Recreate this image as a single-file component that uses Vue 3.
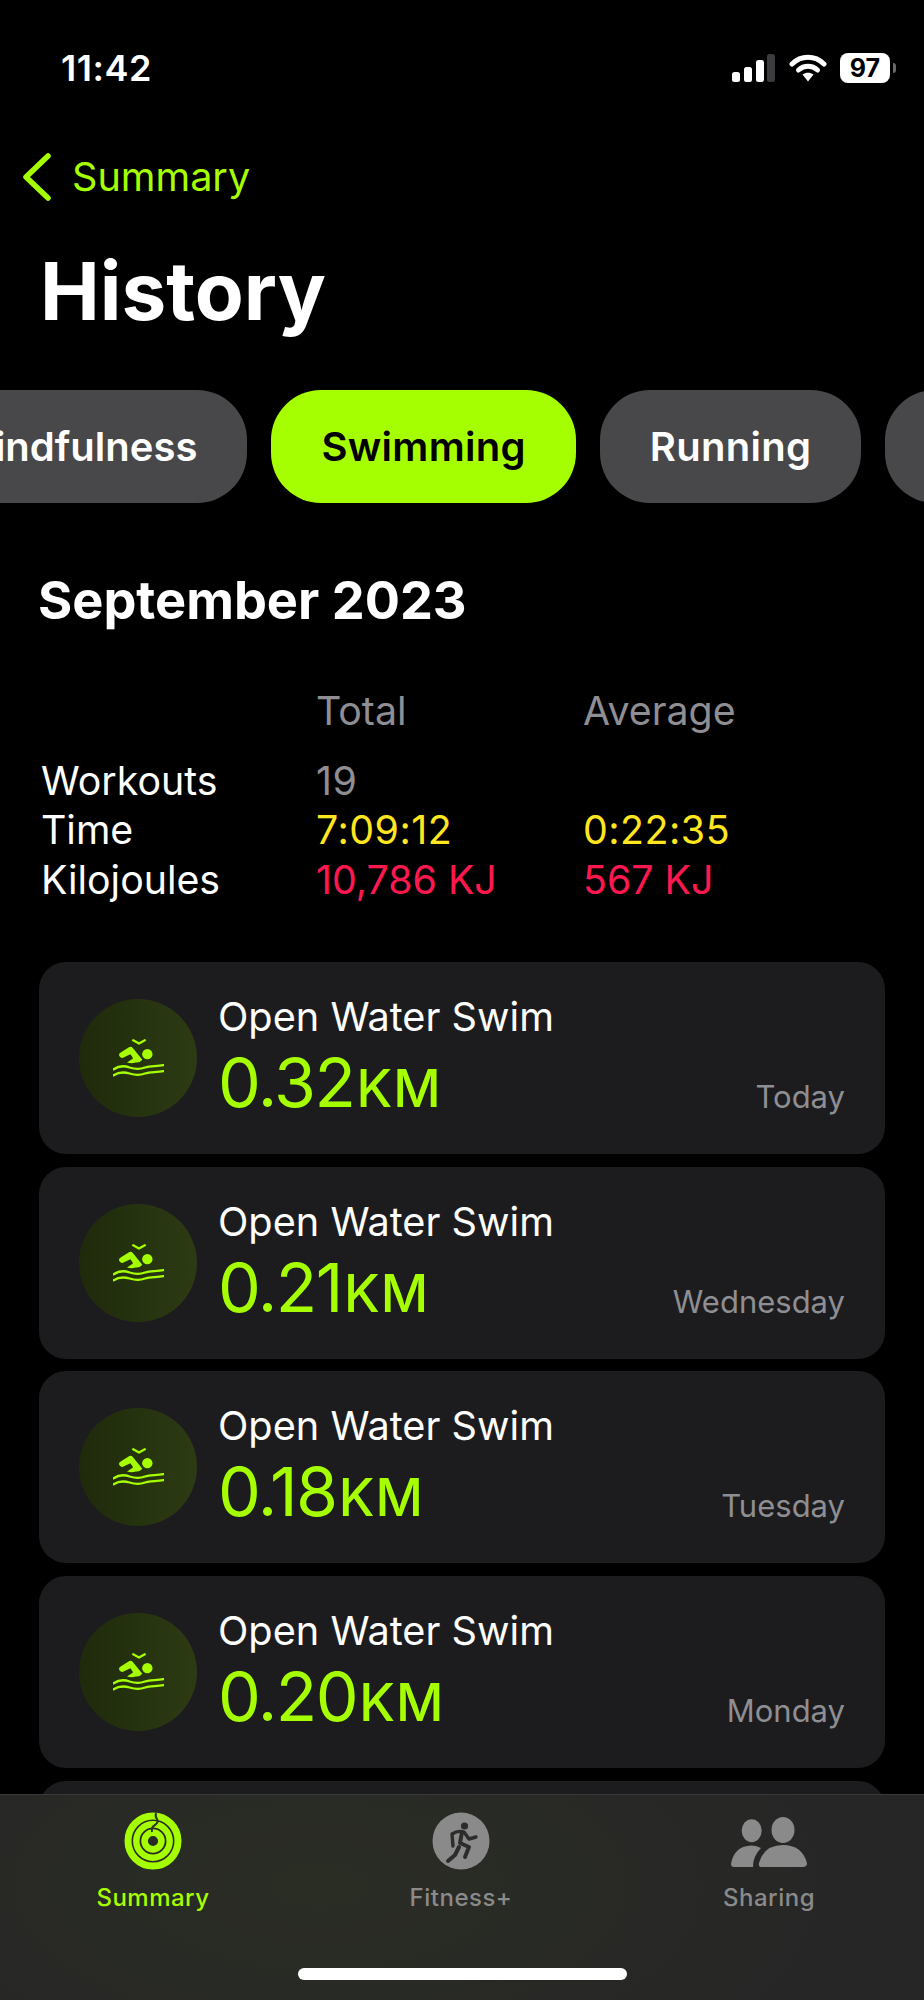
<template>
  <div class="screen">
    <div class="content">
      <div class="status-bar">
        <span class="time">11:42</span>
        <div class="status-icons">
          <svg class="signal" width="43" height="28" viewBox="0 0 43 28">
            <rect x="0" y="18" width="8" height="10" rx="2.5" fill="#fff" />
            <rect x="12" y="13" width="8" height="15" rx="2.5" fill="#fff" />
            <rect x="24" y="6" width="8" height="22" rx="2.5" fill="#fff" />
            <rect x="35" y="0" width="8" height="28" rx="2.5" fill="#3c3c3e" />
          </svg>
          <svg class="wifi" width="38" height="28" viewBox="0 0 38 28">
            <path d="M3 10 C12 1 26 1 35 10" fill="none" stroke="#fff" stroke-width="5" stroke-linecap="round" />
            <path d="M9.5 16 C15 11 23 11 28.5 16" fill="none" stroke="#fff" stroke-width="5" stroke-linecap="round" />
            <path d="M13.5 20.5 C17 18 21 18 24.5 20.5 L19 27.5 Z" fill="#fff" />
          </svg>
          <div class="battery"><span>97</span></div>
          <div class="battery-tip"></div>
        </div>
      </div>

      <div class="back">
        <svg width="30" height="48" viewBox="0 0 30 48">
          <path d="M26 3 L4 24 L26 45" fill="none" stroke="#a6ff00" stroke-width="5.5" stroke-linecap="round" stroke-linejoin="round" />
        </svg>
        <span>Summary</span>
      </div>

      <h1 class="title">History</h1>

      <div class="pills">
        <div v-for="pill in pills" :key="pill.name" class="pill" :class="{ active: pill.active }">{{ pill.name }}</div>
        <div class="pill pill-next"></div>
      </div>

      <h2 class="month">September 2023</h2>

      <div class="stats">
        <span></span>
        <span class="grey">Total</span>
        <span class="grey">Average</span>
        <span class="stat-gap"></span>
        <span class="stat-gap"></span>
        <span class="stat-gap"></span>
        <span>Workouts</span>
        <span class="grey num">19</span>
        <span></span>
        <span>Time</span>
        <span class="yellow num">7:09:12</span>
        <span class="yellow num">0:22:35</span>
        <span>Kilojoules</span>
        <span class="red">10,786 KJ</span>
        <span class="red">567 KJ</span>
      </div>

      <div class="cards">
        <div v-for="w in workouts" :key="w.day" class="card">
          <div class="circle">
            <svg width="51" height="38" viewBox="0 0 153 113">
              <circle cx="103" cy="45" r="15.5" fill="#a6ff00" />
              <path d="M58 2 L78 13 L98 2" fill="none" stroke="#a6ff00" stroke-width="7" stroke-linejoin="round" />
              <path d="M18 48 Q17 43 23 40 L48 24 Q55 21 60 27 L88 62 Q80 72 68 70 Q56 75 42 70 L60 58 Q58 52 52 45 L30 56 Q22 59 18 48 Z" fill="#a6ff00" />
              <path d="M2 90 C20 78 36 80 50 85 C66 90 80 91 96 85 C112 80 130 82 151 78" fill="none" stroke="#a6ff00" stroke-width="7" stroke-linecap="round" />
              <path d="M2 108 C20 97 36 99 50 103 C66 108 80 109 96 103 C112 98 130 100 151 96" fill="none" stroke="#a6ff00" stroke-width="7" stroke-linecap="round" />
            </svg>
          </div>
          <div class="info">
            <div class="name">Open Water Swim</div>
            <div class="dist">{{ w.dist }}<small>KM</small></div>
          </div>
          <div class="day">{{ w.day }}</div>
        </div>
        <div class="card"></div>
      </div>
    </div>

    <div class="tabbar">
      <div class="tab-items">
        <div class="tab active">
          <svg width="58" height="58" viewBox="0 0 58 58">
            <circle cx="29" cy="29" r="25" fill="none" stroke="#a6ff00" stroke-width="7" />
            <circle cx="29" cy="29" r="16.7" fill="none" stroke="#a6ff00" stroke-width="6.4" />
            <circle cx="29" cy="29" r="8.4" fill="none" stroke="#a6ff00" stroke-width="6.6" />
            <path d="M32 1 Q31 5 33 7 Q35 10 31 13 Q27 15 28 20" fill="none" stroke="#2d2f29" stroke-width="2" />
          </svg>
          <span>Summary</span>
        </div>
        <div class="tab">
          <svg width="58" height="58" viewBox="0 0 58 58">
            <circle cx="29" cy="29" r="28.5" fill="#8a8a8a" />
            <circle cx="32.5" cy="14" r="3.6" fill="#2c2c2b" />
            <path d="M21 34 L20 22 Q26 18 32 20 L37 27 L44 25" fill="none" stroke="#2c2c2b" stroke-width="3.4" stroke-linejoin="round" stroke-linecap="round" />
            <path d="M30 20 L28 31 L37 35 L33 45" fill="none" stroke="#2c2c2b" stroke-width="4" stroke-linejoin="round" stroke-linecap="round" />
            <path d="M27 35 L23 43 L16 49" fill="none" stroke="#2c2c2b" stroke-width="4" stroke-linejoin="round" stroke-linecap="round" />
          </svg>
          <span>Fitness+</span>
        </div>
        <div class="tab">
          <svg width="78" height="58" viewBox="0 0 78 58">
            <ellipse cx="21.7" cy="18.7" rx="10" ry="11.5" fill="#8a8a8a" />
            <ellipse cx="53" cy="18" rx="11.5" ry="13" fill="#8a8a8a" />
            <path d="M1 52 Q1 55 4 55 L23 55 Q23 44 31 36 Q27 33.5 21.7 33.5 Q4 34 1 52 Z" fill="#8a8a8a" />
            <path d="M29 51 Q28 55 32 55 L73 55 Q77 55 77 51 Q72 33 53 33 Q34 33 29 51 Z" fill="#8a8a8a" />
          </svg>
          <span>Sharing</span>
        </div>
      </div>
      <div class="home-indicator"></div>
    </div>
  </div>
</template>

<script setup>
const pills = [
  { name: 'Mindfulness' },
  { name: 'Swimming', active: true },
  { name: 'Running' }
]

const workouts = [
  { dist: '0.32', day: 'Today' },
  { dist: '0.21', day: 'Wednesday' },
  { dist: '0.18', day: 'Tuesday' },
  { dist: '0.20', day: 'Monday' }
]
</script>

<style>
html,
body {
  background: #000;
}
</style>

<style scoped>
.screen {
  width: 924px;
  height: 2000px;
  background: #000;
  color: #fff;
  font-family: Inter, "Liberation Sans", sans-serif;
  display: flex;
  flex-direction: column;
  overflow: hidden;
}

.content {
  flex: 1;
  min-height: 0;
  overflow: hidden;
}

.status-bar {
  height: 52px;
  margin-top: 42px;
  padding: 0 28px 0 61px;
  display: flex;
  align-items: center;
  justify-content: space-between;
}

.time {
  font-size: 36px;
  font-weight: 600;
  letter-spacing: 0.5px;
}

.status-icons {
  display: flex;
  align-items: center;
}

.signal {
  margin-right: 14px;
}

.wifi {
  margin-right: 13px;
}

.battery {
  width: 50px;
  height: 30px;
  background: #fff;
  border-radius: 8px;
  color: #000;
  font-size: 25px;
  font-weight: 700;
  line-height: 30px;
  text-align: center;
}

.battery-tip {
  width: 3px;
  height: 10px;
  margin-left: 3px;
  background: #6a6a6c;
  border-radius: 0 3px 3px 0;
}

.back {
  margin-top: 57px;
  padding-left: 22px;
  height: 52px;
  display: flex;
  align-items: center;
  gap: 20px;
  color: #a6ff00;
  font-size: 39.6px;
}

.title {
  margin: 38px 0 0 40px;
  font-size: 80px;
  font-weight: 700;
  line-height: 100px;
}

.pills {
  margin-top: 49px;
  margin-left: -92px;
  display: flex;
  gap: 24px;
}

.pill {
  flex-shrink: 0;
  height: 113px;
  padding: 0 50px;
  border-radius: 50px;
  background: #48484a;
  font-size: 40px;
  font-weight: 600;
  line-height: 113px;
  letter-spacing: 0.3px;
}

.pill:first-child {
  letter-spacing: 0;
}

.pill-next {
  width: 100px;
}

.pill.active {
  background: #a6ff00;
  color: #000;
}

.month {
  margin: 64px 0 0 38px;
  font-size: 52.3px;
  font-weight: 700;
  line-height: 66px;
}

.stats {
  margin: 53px 0 0 41px;
  display: grid;
  grid-template-columns: 275px 267px 1fr;
  font-size: 39.3px;
  line-height: 49.5px;
}

.stat-gap {
  height: 20px;
}

.num {
  letter-spacing: 0.5px;
}

.grey {
  color: #8e8e93;
}

.yellow {
  color: #ffe620;
}

.red {
  color: #ff1850;
}

.cards {
  margin: 58px 39px 0;
  display: flex;
  flex-direction: column;
  gap: 12.7px;
}

.card {
  flex-shrink: 0;
  height: 192px;
  padding: 0 40px;
  background: #1c1c1e;
  border-radius: 27px;
  display: flex;
  align-items: center;
}

.circle {
  width: 118px;
  height: 118px;
  flex-shrink: 0;
  border-radius: 50%;
  background: linear-gradient(90deg, #1e2a0a, #2d3b14);
  display: flex;
  align-items: center;
  justify-content: center;
}

.info {
  margin-left: 21px;
  align-self: flex-start;
  padding-top: 30px;
}

.name {
  font-size: 39.7px;
  line-height: 50px;
}

.dist {
  margin-top: -2px;
  color: #a6ff00;
  font-size: 68px;
  line-height: 84px;
  letter-spacing: -1.5px;
}

.dist small {
  font-size: 52px;
  font-weight: 500;
  margin-left: 2px;
  letter-spacing: 1px;
}

.day {
  margin-left: auto;
  align-self: flex-end;
  padding-bottom: 37px;
  color: #8e8e93;
  font-size: 31px;
  line-height: 40px;
}

.tabbar {
  flex-shrink: 0;
  height: 205px;
  border-top: 1px solid #3a3a3b;
  background:
    radial-gradient(ellipse 520px 240px at 320px 90px, rgba(60, 75, 30, 0.2), rgba(60, 75, 30, 0)),
    #262626;
  margin-top: -1px;
  position: relative;
}

.tab {
  position: absolute;
  top: 17px;
  width: 200px;
  display: flex;
  flex-direction: column;
  align-items: center;
  gap: 12px;
  color: #8a8a8a;
  font-size: 24px;
  font-weight: 500;
  line-height: 32px;
  letter-spacing: 0.5px;
}

.tab:nth-child(1) {
  left: 53px;
}

.tab:nth-child(2) {
  left: 361px;
}

.tab:nth-child(3) {
  left: 669px;
}

.tab.active {
  color: #a6ff00;
}

.home-indicator {
  position: absolute;
  left: 298px;
  bottom: 20px;
  width: 329px;
  height: 12px;
  border-radius: 6px;
  background: #fff;
}
</style>
